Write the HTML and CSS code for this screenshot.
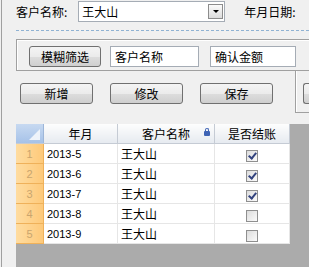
FILE: index.html
```html
<!DOCTYPE html>
<html>
<head>
  <meta charset="UTF-8">
  <title>客户结账</title>
  <link rel="stylesheet" href="styles.css">
</head>
<body>
  <div class="panel">

    <div class="top-row">
      <span class="lbl">客户名称:</span>
      <div class="combo">
        <span class="combo-text">王大山</span>
        <span class="combo-btn"><span class="arrow"></span></span>
      </div>
      <span class="lbl date-lbl">年月日期:</span>
    </div>

    <div class="dash"></div>

    <div class="filter">
      <button class="btn btn-filter">模糊筛选</button>
      <div class="tbox tbox-name">客户名称</div>
      <div class="tbox tbox-amount">确认金额</div>
    </div>

    <div class="actions">
      <button class="btn">新增</button>
      <button class="btn">修改</button>
      <button class="btn">保存</button>
      <div class="side-frame">
        <button class="btn btn-cut"></button>
      </div>
    </div>

    <div class="grid-area">
      <table class="grid">
        <thead>
          <tr>
            <th class="corner"><span class="tri"></span></th>
            <th class="c-ym">年月</th>
            <th class="c-name">客户名称<span class="lock"></span></th>
            <th class="c-chk">是否结账</th>
          </tr>
        </thead>
        <tbody>
          <tr><td class="rh">1</td><td class="num">2013-5</td><td>王大山</td><td class="chk"><span class="cb on"></span></td></tr>
          <tr><td class="rh">2</td><td class="num">2013-6</td><td>王大山</td><td class="chk"><span class="cb on"></span></td></tr>
          <tr><td class="rh">3</td><td class="num">2013-7</td><td>王大山</td><td class="chk"><span class="cb on"></span></td></tr>
          <tr><td class="rh">4</td><td class="num">2013-8</td><td>王大山</td><td class="chk"><span class="cb"></span></td></tr>
          <tr><td class="rh">5</td><td class="num">2013-9</td><td>王大山</td><td class="chk"><span class="cb"></span></td></tr>
        </tbody>
      </table>
    </div>

  </div>
</body>
</html>
```

FILE: styles.css
```css
html, body {
  margin: 0;
  height: 100%;
  overflow: hidden;
}

body {
  background: #f0f0f0;
  font-family: "Noto Sans CJK SC", "Liberation Sans", sans-serif;
  font-size: 12px;
  color: #000;
}

.panel {
  margin-left: 1px;
  border-left: 1px solid #a0a0a0;
  padding-left: 14px;
  padding-top: 1px;
  height: 100%;
  box-sizing: border-box;
  display: flex;
  flex-direction: column;
  overflow: hidden;
}

/* top row */
.top-row {
  display: flex;
  align-items: center;
  height: 21px;
  white-space: nowrap;
}

.lbl {
  line-height: 21px;
}

.combo {
  margin-left: 11px;
  width: 147px;
  height: 21px;
  box-sizing: border-box;
  border: 1px solid #a5acb5;
  background: #fff;
  display: flex;
  align-items: center;
  justify-content: space-between;
  padding: 0 1px 0 3px;
}

.combo-btn {
  width: 15px;
  height: 15px;
  box-sizing: border-box;
  border: 1px solid #8c8c8c;
  background: linear-gradient(#fbfbfb, #dcdcdc);
  display: flex;
  align-items: center;
  justify-content: center;
}

.arrow {
  width: 0;
  height: 0;
  border-left: 3px solid transparent;
  border-right: 3px solid transparent;
  border-top: 3px solid #000;
}

.date-lbl {
  margin-left: 19px;
}

.dash {
  margin-top: 8px;
  border-top: 1px dashed #8fb2d3;
}

/* filter group, runs off the right edge */
.filter {
  margin-top: 8px;
  height: 32px;
  box-sizing: border-box;
  border: 1px solid #a0a0a0;
  border-right: none;
  box-shadow: inset 1px 1px 0 #fff;
  padding: 6px 0 0 12px;
  display: flex;
  align-items: flex-start;
}

.btn {
  width: 73px;
  height: 21px;
  padding: 0;
  border: 1px solid #707070;
  border-radius: 3px;
  background: linear-gradient(#f4f4f4 0%, #ebebeb 50%, #dddddd 51%, #cfcfcf 100%);
  font-family: "Noto Sans CJK SC", "Liberation Sans", sans-serif;
  font-size: 12px;
  color: #000;
  line-height: 19px;
}

.btn-filter {
  width: 72px;
}

.tbox {
  height: 21px;
  box-sizing: border-box;
  border: 1px solid #a5acb5;
  background: #fff;
  padding-left: 4px;
  line-height: 19px;
}

.tbox-name {
  margin-left: 9px;
  width: 89px;
}

.tbox-amount {
  margin-left: 11px;
  width: 86px;
}

/* action buttons */
.actions {
  display: flex;
  align-items: flex-start;
  height: 42px;
  padding-left: 4px;
}

.actions > .btn {
  margin-top: 12px;
  margin-right: 17px;
  flex: none;
}

.side-frame {
  margin-left: 5px;
  height: 42px;
  flex: 1;
  box-sizing: border-box;
  border-left: 1px solid #a0a0a0;
  border-bottom: 1px solid #a0a0a0;
  box-shadow: inset 1px 0 0 #fff;
  padding: 12px 0 0 7px;
  overflow: hidden;
}

.btn-cut {
  width: 8px;
  border-right: none;
  border-radius: 3px 0 0 3px;
  display: block;
}

/* grid */
.grid-area {
  margin-top: 11px;
  flex: 1;
  background: #ababab;
}

.grid {
  border-collapse: collapse;
  table-layout: fixed;
  width: 273px;
  background: #fff;
  border-right: 1px solid #6f6f6f;
  border-bottom: 1px solid #6f6f6f;
}

.grid th, .grid td {
  height: 19px;
  padding: 0;
  white-space: nowrap;
  overflow: hidden;
}

.grid th {
  font-weight: normal;
  background: linear-gradient(#fdfdfd, #e6eaf0);
  border-right: 1px solid #c5cbd4;
  border-bottom: 1px solid #c5cbd4;
  text-align: center;
  position: relative;
}

.grid th.corner {
  width: 27px;
  background: linear-gradient(#c7d9f1, #a6c2e8);
  border-right: 1px solid #9db6d8;
}

.tri {
  position: absolute;
  right: 3px;
  bottom: 3px;
  width: 0;
  height: 0;
  border-left: 11px solid transparent;
  border-bottom: 11px solid #eef3fa;
}

.c-ym { width: 73px; }
.c-name { width: 96px; }
.c-chk { width: 74px; }

.lock {
  position: absolute;
  right: 4px;
  top: 7px;
  width: 6px;
  height: 5px;
  background: #3f64b5;
  border-radius: 1px;
}

.lock::before {
  content: "";
  position: absolute;
  left: 1px;
  top: -3px;
  width: 2px;
  height: 3px;
  border: 1px solid #3f64b5;
  border-bottom: none;
  border-radius: 2px 2px 0 0;
}

.grid td {
  border-right: 1px solid #e6e6e6;
  border-bottom: 1px solid #e6e6e6;
  padding-left: 3px;
}

.grid td.rh {
  padding-left: 0;
  text-align: center;
  color: #c9a56e;
  font-family: "Liberation Sans", sans-serif;
  font-size: 11px;
  background: linear-gradient(90deg, #ffdca0, #fdc97a);
  border-right: 1px solid #efb15a;
  border-bottom: 1px solid #efb15a;
}

.grid td.num {
  font-family: "Liberation Sans", sans-serif;
  font-size: 11px;
}

.grid td.chk {
  padding-left: 0;
  text-align: center;
}

.cb {
  display: inline-block;
  vertical-align: middle;
  width: 12px;
  height: 12px;
  box-sizing: border-box;
  border: 1px solid #8f8f8f;
  background: linear-gradient(135deg, #dcdcdc, #fbfbfb);
  position: relative;
}

.cb.on::after {
  content: "";
  position: absolute;
  left: 3px;
  top: 0px;
  width: 3px;
  height: 6px;
  border-right: 2px solid #33437e;
  border-bottom: 2px solid #33437e;
  transform: rotate(40deg);
}
```
